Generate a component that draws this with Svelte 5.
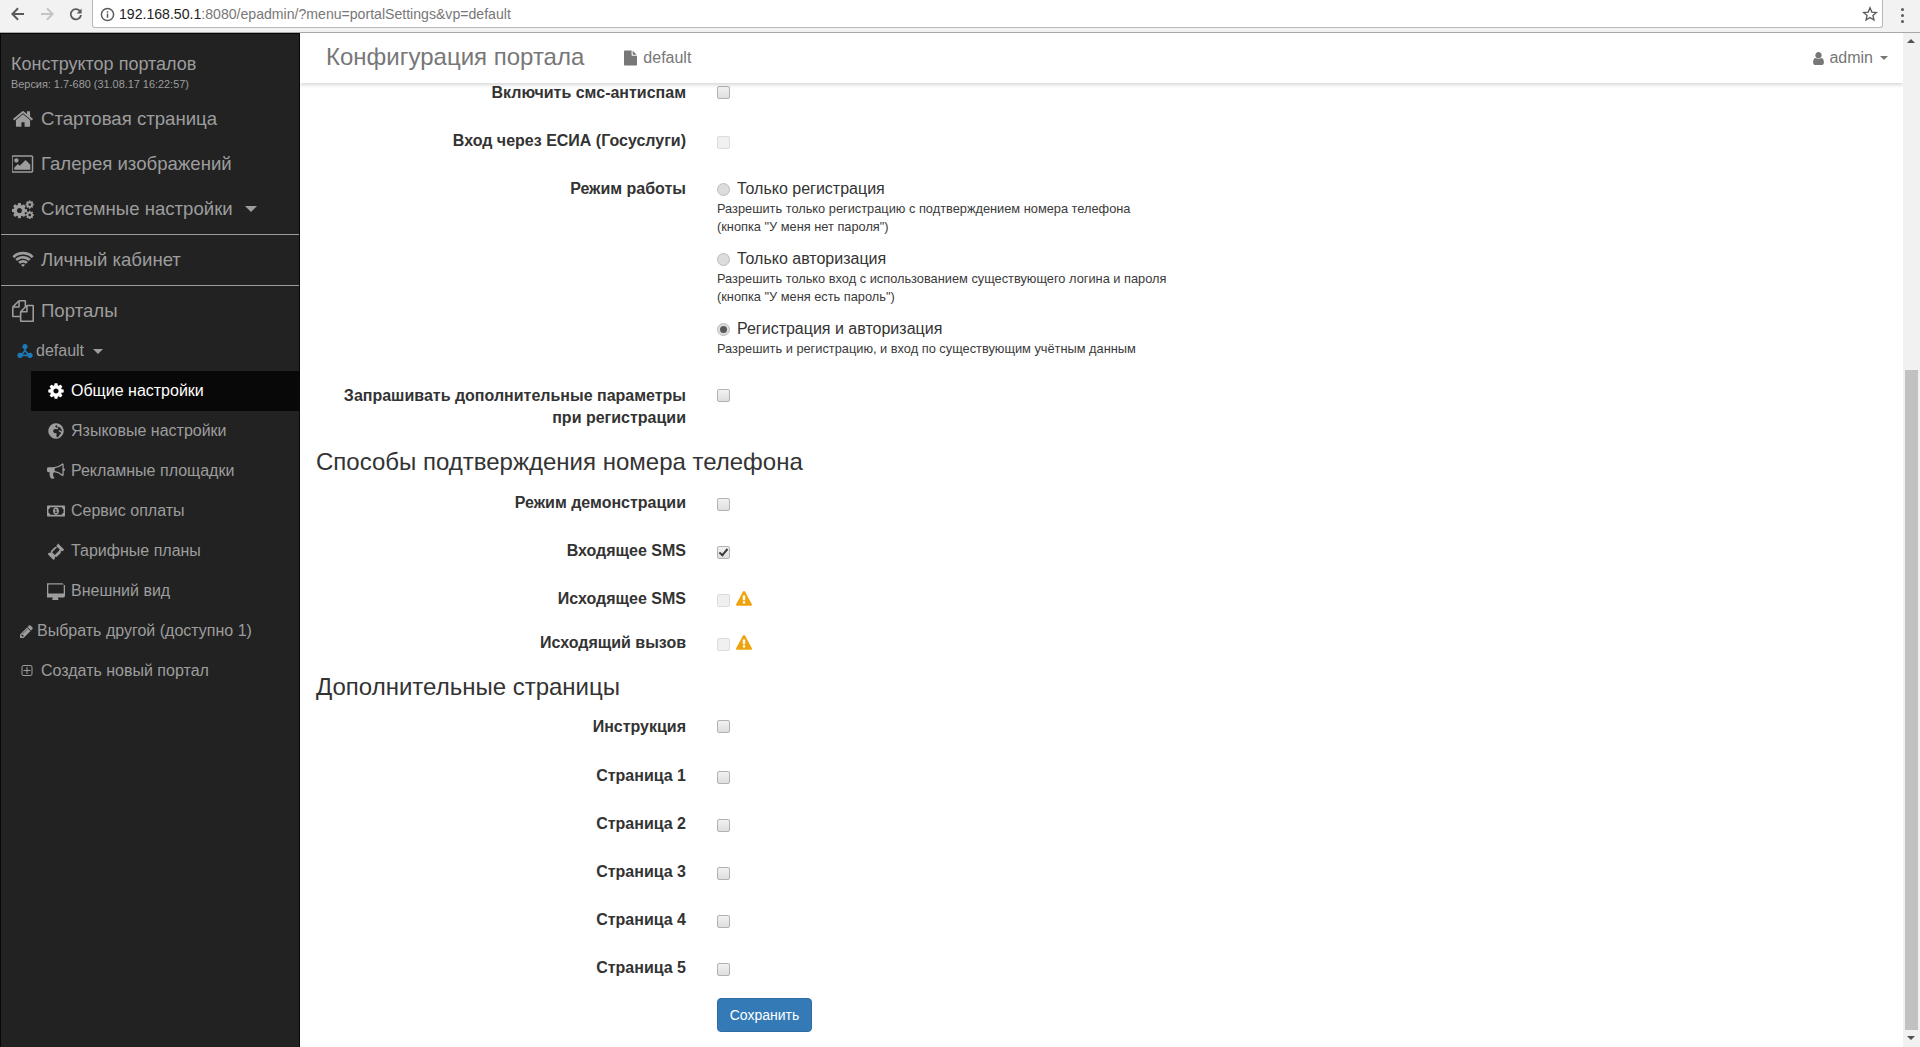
<script lang="ts">
  const icons = {
    home: ['0 0 1792 1792', 'M1472 992v480q0 26-19 45t-45 19h-384v-384h-256v384h-384q-26 0-45-19t-19-45v-480q0-1 .5-3t.5-3l575-474 575 474q1 2 1 6zm223-69l-62 74q-8 9-21 11h-3q-13 0-21-7l-692-577-692 577q-12 8-24 7-13-2-21-11l-62-74q-8-10-7-23.5t11-21.5l719-599q32-26 76-26t76 26l244 204v-195q0-14 9-23t23-9h192q14 0 23 9t9 23v408l219 182q10 8 11 21.5t-7 23.5z'],
    picture: ['0 0 1920 1792', 'M576 576q0 80-56 136t-136 56-136-56-56-136 56-136 136-56 136 56 56 136zm1024 384v448h-1408v-192l320-320 160 160 512-512zm96-704h-1600q-13 0-22.5 9.5t-9.5 22.5v1216q0 13 9.5 22.5t22.5 9.5h1600q13 0 22.5-9.5t9.5-22.5v-1216q0-13-9.5-22.5t-22.5-9.5zm160 32v1216q0 66-47 113t-113 47h-1600q-66 0-113-47t-47-113v-1216q0-66 47-113t113-47h1600q66 0 113 47t47 113z'],
    cog: ['0 0 1792 1792', 'M1152 896q0-106-75-181t-181-75-181 75-75 181 75 181 181 75 181-75 75-181zm512-109v222q0 12-8 23t-20 13l-185 28q-19 54-39 91 35 50 107 138 10 12 10 25t-9 23q-27 37-99 108t-94 71q-12 0-26-9l-138-108q-44 23-91 38-16 136-29 186-7 28-36 28h-222q-14 0-24.5-8.5t-11.5-21.5l-28-184q-49-16-90-37l-141 107q-10 9-25 9-14 0-25-11-126-114-165-168-7-10-7-23 0-12 8-23 15-21 51-66.5t54-70.5q-27-50-41-99l-183-27q-13-2-21-12.5t-8-23.5v-222q0-12 8-23t19-13l186-28q14-46 39-92-40-57-107-138-10-12-10-24 0-10 9-23 26-36 98.5-107.5t94.5-71.5q13 0 26 10l138 107q44-23 91-38 16-136 29-186 7-28 36-28h222q14 0 24.5 8.5t11.5 21.5l28 184q49 16 90 37l142-107q9-9 24-9 13 0 25 10 129 119 165 170 7 8 7 22 0 12-8 23-15 21-51 66.5t-54 70.5q26 50 41 98l183 28q13 2 21 12.5t8 23.5z'],
    wifi: ['0 0 2048 1792', 'M1024 1523q-20 0-93-73.5t-73-93.5q0-32 62.5-54t103.5-22 103.5 22 62.5 54q0 20-73 93.5t-93 73.5zm270-271q-2 0-40-25t-101.5-50-128.5-25-128.5 25-101 50-40.5 25q-18 0-93.5-75t-75.5-93q0-13 10-23 78-77 196-121t233-44 233 44 196 121q10 10 10 23 0 18-75.5 93t-93.5 75zm273-272q-11 0-23-8-136-105-252-154.5t-268-49.5q-85 0-170.5 22t-149 53-113.5 62-79 53-31 22q-17 0-92-75t-75-93q0-12 10-22 132-132 320-205t380-73 380 73 320 205q10 10 10 22 0 18-75 93t-92 75zm271-271q-11 0-22-9-179-157-371.5-236.5t-420.5-79.5-420.5 79.5-371.5 236.5q-11 9-22 9-17 0-92.5-75t-75.5-93q0-13 10-23 187-186 445-288t527-102 527 102 445 288q10 10 10 23 0 18-75.5 93t-92.5 75z'],
    files: ['0 0 1792 1792', 'M1696 384q40 0 68 28t28 68v1216q0 40-28 68t-68 28h-960q-40 0-68-28t-28-68v-288h-544q-40 0-68-28t-28-68v-672q0-40 20-88t48-76l408-408q28-28 76-48t88-20h416q40 0 68 28t28 68v328q68-40 128-40h416zm-544 213l-299 299h299v-299zm-640-384l-299 299h299v-299zm196 647l316-316v-416h-384v416q0 40-28 68t-68 28h-416v640h512v-256q0-40 20-88t48-76zm956 804v-1152h-384v416q0 40-28 68t-68 28h-416v640h896z'],
    tree: ['0 0 1792 1792', 'M896 120a290 290 0 1 1-1 0zM340 1080a300 300 0 1 1-1 0zM1452 1080a300 300 0 1 1-1 0zM800 500h192v300l330 430-140 110-290-370-280 370-140-110 328-430zM560 1300h672v170H560z'],
    globe: ['0 0 1792 1792', 'M896 128a768 768 0 1 1-1 0zM1000 300l-120 60-60 120 100 80 140-30 70 110-120 90-200-40-170 90-30 170 130 160 170-10 60 120-50 150 90 170 130-60 100-190 140-130-20-130-180-90-20-140 170 40 90 100 70-50c-30-210-180-430-490-420z'],
    bullhorn: ['0 0 1792 1792', 'M1664 640q53 0 90.5 37.5t37.5 90.5-37.5 90.5-90.5 37.5v384q0 52-38 90t-90 38q-417-347-812-380-58 19-91 66t-31 100.5 40 92.5q-20 33-23 65.5t6 58 33.5 55 48 50 61.5 50.5q-29 58-111.5 83t-168.5 11.5-132-55.5q-7-23-29.5-87.5t-32-94.5-23-89-15-101 3.5-98.5 22-110.5h-122q-66 0-113-47t-47-113v-192q0-66 47-113t113-47h480q435 0 896-384 52 0 90 38t38 90v384zm-128 604v-954q-394 302-768 343v270q377 42 768 341z'],
    money: ['0 0 1920 1792', 'M96 320h1728q40 0 68 28t28 68v960q0 40-28 68t-68 28H96q-40 0-68-28t-28-68V416q0-40 28-68t68-28zM330 500q0 106-75 150t-100 50v392q60 10 100 54t75 146h1260q30-100 75-146t100-54V700q-60-10-100-54t-75-146zM960 512q160 0 240 120t80 264-80 264-240 120-240-120-80-264 80-264 240-120zM830 1120h270v-90h-90V670H910l-110 100 60 70 50-45v235h-80z'],
    ticket: ['0 0 1792 1792', 'M1050 100l640 640q30 30 0 60l-150 130q-60-60-140-10t-10 140L960 1490q-60-60-140-10t-10 140l-130 140q-30 30-60 0L100 1240q-30-30 0-60l130-140q70 60 140 0t10-140l430-430q70 70 140 10t-10-140l150-140q30-30 60-60zM1020 510L510 1020l262 262 510-510z'],
    desktop: ['0 0 1792 1792', 'M1664 1120v-832q0-13-9.5-22.5t-22.5-9.5h-1472q-13 0-22.5 9.5t-9.5 22.5v832q0 13 9.5 22.5t22.5 9.5h1472q13 0 22.5-9.5t9.5-22.5zm128-832v1088q0 66-47 113t-113 47h-544q0 37 16 77.5t32 71 16 43.5q0 26-19 45t-45 19h-512q-26 0-45-19t-19-45q0-14 16-44t32-70 16-78h-544q-66 0-113-47t-47-113v-1088q0-66 47-113t113-47h1472q66 0 113 47t47 113z'],
    pencil: ['0 0 1792 1792', 'M491 1536l91-91-235-235-91 91v107h128v128h107zm523-928q0-22-22-22-10 0-17 7l-542 542q-7 7-7 17 0 22 22 22 10 0 17-7l542-542q7-7 7-17zm-54-192l416 416-832 832h-416v-416zm683 96q0 53-37 90l-166 166-416-416 166-165q36-38 90-38 53 0 91 38l235 234q37 39 37 91z'],
    plus: ['0 0 1792 1792', 'M1344 800v64q0 14-9 23t-23 9h-352v352q0 14-9 23t-23 9h-64q-14 0-23-9t-9-23v-352h-352q-14 0-23-9t-9-23v-64q0-14 9-23t23-9h352v-352q0-14 9-23t23-9h64q14 0 23 9t9 23v352h352q14 0 23 9t9 23zm128 448v-832q0-66-47-113t-113-47h-832q-66 0-113 47t-47 113v832q0 66 47 113t113 47h832q66 0 113-47t47-113zm128-832v832q0 119-84.5 203.5t-203.5 84.5h-832q-119 0-203.5-84.5t-84.5-203.5v-832q0-119 84.5-203.5t203.5-84.5h832q119 0 203.5 84.5t84.5 203.5z'],
    file: ['0 0 1536 1792', 'M1024 512V40q22 14 36 28l408 408q14 14 28 36h-472zm-128 32q0 40 28 68t68 28h544v1056q0 40-28 68t-68 28H96q-40 0-68-28t-28-68V96q0-40 28-68t68-28h800v544z'],
    user: ['0 0 1792 1792', 'M1536 1399q0 109-62.5 187t-150.5 78h-854q-88 0-150.5-78t-62.5-187q0-85 8.5-160.5t31.5-152 58.5-131 94-89 134.5-34.5q131 128 313 128t313-128q76 0 134.5 34.5t94 89 58.5 131 31.5 152 8.5 160.5zm-256-887q0 159-112.5 271.5t-271.5 112.5-271.5-112.5-112.5-271.5 112.5-271.5 271.5-112.5 271.5 112.5 112.5 271.5z'],
    warning: ['0 0 1792 1792', 'M1024 1375v-190q0-14-9.5-23.5t-22.5-9.5h-192q-13 0-22.5 9.5t-9.5 23.5v190q0 14 9.5 23.5t22.5 9.5h192q13 0 22.5-9.5t9.5-23.5zm-2-374l18-459q0-12-10-19-13-11-24-11h-220q-11 0-24 11-10 7-10 21l17 457q0 10 10 16.5t24 6.5h185q14 0 23.5-6.5t10.5-16.5zm-14-934l768 1408q35 63-2 126-17 29-46.5 46t-63.5 17h-1536q-34 0-63.5-17t-46.5-46q-37-63-2-126l768-1408q17-31 47-49t65-18 65 18 47 49z'],
  }

  const subItems = [
    { icon: 'cog', label: 'Общие настройки', active: true },
    { icon: 'globe', label: 'Языковые настройки' },
    { icon: 'bullhorn', label: 'Рекламные площадки' },
    { icon: 'money', label: 'Сервис оплаты' },
    { icon: 'ticket', label: 'Тарифные планы' },
    { icon: 'desktop', label: 'Внешний вид' },
  ]

  const phoneRows = [
    { label: 'Режим демонстрации' },
    { label: 'Входящее SMS', checked: true },
    { label: 'Исходящее SMS', disabled: true, warn: true },
    { label: 'Исходящий вызов', disabled: true, warn: true },
  ]

  const pageRows = ['Инструкция', 'Страница 1', 'Страница 2', 'Страница 3', 'Страница 4', 'Страница 5']
</script>

{#snippet icon(name, cls)}
  <svg class="icon {cls}" viewBox={icons[name][0]} aria-hidden="true"><path d={icons[name][1]} /></svg>
{/snippet}

{#snippet check(disabled, checked)}
  <input class="check" type="checkbox" {disabled} {checked} />
{/snippet}

<div class="window">
  <div class="chrome">
    <svg class="nav-btn" viewBox="0 0 16 16"><path d="M14 7H4.800l4-4L7.400 1.600 1 8l6.400 6.400 1.400-1.400-4-4H14z" fill="#5a5a5a" /></svg>
    <svg class="nav-btn" viewBox="0 0 16 16"><path d="M2 7h9.200l-4-4 1.400-1.400L15 8l-6.400 6.400L7.200 13l4-4H2z" fill="#c4c4c4" /></svg>
    <svg class="nav-btn" viewBox="0 0 16 16"><path d="M13.600 2.400v5h-5l2.200-2.200A4.200 4.200 0 1 0 12 9h1.900a6 6 0 1 1-1.700-5z" fill="#5a5a5a" /></svg>
    <div class="omnibox">
      <svg class="info" viewBox="0 0 16 16"><circle cx="8" cy="8" r="6.500" fill="none" stroke="#5a5a5a" stroke-width="1.600" /><rect x="7.200" y="7" width="1.600" height="4.500" fill="#5a5a5a" /><rect x="7.200" y="4.500" width="1.600" height="1.600" fill="#5a5a5a" /></svg>
      <span class="url"><b>192.168.50.1</b>:8080/epadmin/?menu=portalSettings&amp;vp=default</span>
      <svg class="star" viewBox="0 0 16 16"><path d="M8 1.800l1.800 4.300 4.600.4-3.500 3 1.100 4.500L8 11.600 4 14l1.100-4.500-3.500-3 4.600-.4z" fill="none" stroke="#5a5a5a" stroke-width="1.300" /></svg>
    </div>
    <div class="dots"><i></i><i></i><i></i></div>
  </div>

  <div class="body">
    <aside class="sidebar">
      <div class="brand">
        <div class="brand-name">Конструктор порталов</div>
        <div class="brand-version">Версия: 1.7-680 (31.08.17 16:22:57)</div>
      </div>
      <a class="main-link">{@render icon('home', 'i-main')}Стартовая страница</a>
      <a class="main-link">{@render icon('picture', 'i-main')}Галерея изображений</a>
      <a class="main-link">
        <svg class="icon i-main" viewBox="0 0 2048 1792" aria-hidden="true">
          <path transform="translate(-130 220) scale(.92)" d={icons.cog[1]} />
          <path transform="translate(1200 30) scale(.5)" d={icons.cog[1]} />
          <path transform="translate(1200 1000) scale(.5)" d={icons.cog[1]} />
        </svg>
        Системные настройки<span class="caret big"></span>
      </a>
      <hr />
      <a class="main-link">{@render icon('wifi', 'i-main')}Личный кабинет</a>
      <hr />
      <a class="main-link">{@render icon('files', 'i-main')}Порталы</a>
      <a class="portal tree">{@render icon('tree', 'i-tree')}default<span class="caret"></span></a>
      <ul class="subnav">
        {#each subItems as item}
          <li class:active={item.active}>{@render icon(item.icon, 'i-sub')}{item.label}</li>
        {/each}
      </ul>
      <a class="portal">{@render icon('pencil', 'i-pick')}Выбрать другой (доступно 1)</a>
      <a class="portal">{@render icon('plus', 'i-plus')}Создать новый портал</a>
    </aside>

    <main class="main">
      <header class="topbar">
        <span class="title">Конфигурация портала</span>
        <span class="doc">{@render icon('file', 'i-file')}default</span>
        <span class="admin">{@render icon('user', 'i-user')}admin<span class="caret small"></span></span>
      </header>

      <form class="form">
        <div class="row first">
          <span class="label">Включить смс-антиспам</span>
          <div>{@render check(false, false)}</div>
        </div>
        <div class="row">
          <span class="label">Вход через ЕСИА (Госуслуги)</span>
          <div>{@render check(true, false)}</div>
        </div>
        <div class="row modes">
          <span class="label">Режим работы</span>
          <div class="radios">
            <div class="radio">
              <label><input type="radio" name="mode" />Только регистрация</label>
              <p>Разрешить только регистрацию с подтверждением номера телефона<br />(кнопка "У меня нет пароля")</p>
            </div>
            <div class="radio">
              <label><input type="radio" name="mode" />Только авторизация</label>
              <p>Разрешить только вход с использованием существующего логина и пароля<br />(кнопка "У меня есть пароль")</p>
            </div>
            <div class="radio">
              <label><input type="radio" name="mode" checked />Регистрация и авторизация</label>
              <p>Разрешить и регистрацию, и вход по существующим учётным данным</p>
            </div>
          </div>
        </div>
        <div class="row extra">
          <span class="label">Запрашивать дополнительные параметры<br />при регистрации</span>
          <div>{@render check(false, false)}</div>
        </div>

        <h3>Способы подтверждения номера телефона</h3>
        {#each phoneRows as r}
          <div class="row" class:warned={r.warn}>
            <span class="label">{r.label}</span>
            <div class="ctl">
              {@render check(r.disabled, r.checked)}
              {#if r.warn}{@render icon('warning', 'i-warn')}{/if}
            </div>
          </div>
        {/each}

        <h3 class="pages">Дополнительные страницы</h3>
        {#each pageRows as label, i}
          <div class="row" class:lead={i === 0}>
            <span class="label">{label}</span>
            <div>{@render check(false, false)}</div>
          </div>
        {/each}

        <div class="row actions">
          <span></span>
          <div><button type="button">Сохранить</button></div>
        </div>
      </form>
    </main>

    <div class="scrollbar">
      <span class="arrow up"></span>
      <div class="track"><div class="thumb"></div></div>
      <span class="arrow down"></span>
    </div>
  </div>
</div>

<style>
  :global(body) {
    margin: 0;
    font-family: "Liberation Sans", Arial, sans-serif;
    font-size: 16px;
    line-height: 20px;
    color: #333;
    background: #fff;
  }

  .window {
    height: 1047px;
    display: flex;
    flex-direction: column;
    overflow: hidden;
  }

  .chrome {
    height: 33px;
    box-sizing: border-box;
    flex: none;
    display: flex;
    align-items: flex-start;
    padding-left: 10px;
    background: #f2f2f2;
    border-bottom: 1px solid #a8a8a8;
  }

  .nav-btn {
    width: 16px;
    height: 16px;
    margin-top: 6px;
    margin-right: 13px;
  }

  .omnibox {
    width: 1791px;
    height: 28px;
    box-sizing: border-box;
    margin-left: -5px;
    display: flex;
    align-items: center;
    padding: 1px 4px 0 7px;
    background: #fff;
    border: 1px solid #b8b8b8;
    border-top: 0;
    border-radius: 0 0 3px 3px;
  }

  .info {
    width: 15px;
    height: 15px;
    margin-right: 4px;
  }

  .url {
    flex: 1;
    font-size: 14.1px;
    color: #777;
  }

  .url b {
    font-weight: normal;
    color: #222;
  }

  .star {
    width: 16px;
    height: 16px;
  }

  .dots {
    display: flex;
    flex-direction: column;
    gap: 3px;
    margin: 8px 0 0 18px;
  }

  .dots i {
    width: 3px;
    height: 3px;
    border-radius: 50%;
    background: #5a5a5a;
  }

  .body {
    flex: 1;
    display: flex;
    min-height: 0;
  }

  .sidebar {
    width: 300px;
    flex: none;
    box-sizing: border-box;
    background: #222;
    border: 1px solid #080808;
    border-bottom: 0;
    color: #9d9d9d;
  }

  .brand {
    padding: 20px 0 0 10px;
    height: 62px;
    box-sizing: border-box;
  }

  .brand-name {
    font-size: 18px;
    line-height: 20px;
  }

  .brand-version {
    font-size: 10.900px;
    line-height: 20px;
  }

  .main-link {
    display: flex;
    align-items: center;
    height: 45px;
    padding-left: 11px;
    font-size: 18.600px;
  }

  .sidebar hr {
    border: 0;
    border-top: 1px solid #9d9d9d;
    margin: 3px 0 2px;
    height: 0;
  }

  .caret {
    width: 0;
    height: 0;
    border-top: 5px solid currentColor;
    border-left: 5px solid transparent;
    border-right: 5px solid transparent;
    margin-left: 9px;
  }

  .caret.big {
    border-top-width: 6px;
    border-left-width: 6px;
    border-right-width: 6px;
    margin-left: 12px;
  }

  .caret.small {
    border-top-width: 4px;
    border-left-width: 4px;
    border-right-width: 4px;
    margin-left: 7px;
  }

  .portal {
    display: flex;
    align-items: center;
    height: 40px;
    font-size: 16px;
    padding-left: 16px;
  }

  .portal.tree {
    margin-top: -2px;
  }

  .subnav {
    list-style: none;
    margin: 0 0 0 30px;
    padding: 0;
  }

  .subnav li {
    display: flex;
    align-items: center;
    height: 40px;
    padding-left: 17px;
    font-size: 16px;
  }

  .subnav li.active {
    background: #080808;
    color: #fff;
  }

  .icon {
    flex: none;
    fill: currentColor;
  }

  .i-main {
    width: 22px;
    height: 22px;
    margin-right: 7px;
  }

  .i-tree {
    width: 16px;
    height: 16px;
    margin-right: 3px;
    color: #1b7ab5;
  }

  .i-sub {
    width: 18px;
    height: 18px;
    margin: 0 6px 0 -1px;
  }

  .i-pick {
    width: 15px;
    height: 15px;
    margin: 0 3px 0 2px;
  }

  .i-plus {
    width: 14px;
    height: 14px;
    margin: 0 7px 0 3px;
  }

  .main {
    flex: 1;
    min-width: 0;
    display: flex;
    flex-direction: column;
    position: relative;
    overflow: hidden;
  }

  .topbar {
    height: 50px;
    box-sizing: border-box;
    flex: none;
    display: flex;
    align-items: center;
    padding: 0 15px 2px 26px;
    color: #777;
    font-size: 16px;
    background: #fff;
    box-shadow: 0 2px 4px rgba(0, 0, 0, 0.16);
    position: relative;
    z-index: 1;
  }

  .title {
    font-size: 24px;
    margin-right: 40px;
  }

  .doc,
  .admin {
    display: flex;
    align-items: center;
    padding-top: 2px;
  }

  .admin {
    margin-left: auto;
  }

  .i-file {
    width: 13px;
    height: 16px;
    margin-right: 6px;
  }

  .i-user {
    width: 15px;
    height: 15px;
    margin-right: 3px;
  }

  .form {
    padding: 0 16px;
  }

  .row {
    display: grid;
    grid-template-columns: 370px 1fr;
    column-gap: 31px;
    height: 48px;
  }

  .row.first {
    margin-top: -1px;
  }

  .label {
    font-weight: bold;
    text-align: right;
    line-height: 22px;
  }

  input {
    appearance: none;
    box-sizing: border-box;
    display: block;
    flex: none;
    width: 13px;
    height: 13px;
    background: linear-gradient(#f2f2f2, #dedede);
    border: 1px solid #b2b2b2;
  }

  .check {
    margin: 6px 0 0;
    border-radius: 2px;
    position: relative;
  }

  .check:disabled {
    background: #f0f0f0;
    border-color: #dcdcdc;
  }

  .check:checked::after {
    content: "";
    position: absolute;
    left: 3px;
    top: 0;
    width: 3px;
    height: 7px;
    border: solid #3c3c3c;
    border-width: 0 2px 2px 0;
    transform: rotate(40deg);
  }

  .first .check,
  .extra .check,
  .lead .check {
    margin-top: 4px;
  }

  .lead {
    height: 49px;
  }

  .modes {
    height: auto;
    margin-bottom: 27px;
  }

  .radio {
    margin-bottom: 12px;
  }

  .radio:last-child {
    margin-bottom: 0;
  }

  .radio label {
    display: flex;
    align-items: center;
    height: 22px;
    line-height: 22px;
  }

  .radio input {
    margin: 0 7px 0 0;
    border-radius: 50%;
    background: #dcdcdc;
    border-color: #bdbdbd;
    position: relative;
  }

  .radio input:checked::after {
    content: "";
    position: absolute;
    left: 2px;
    top: 2px;
    width: 7px;
    height: 7px;
    border-radius: 50%;
    background: #5a5a5a;
  }

  .radio p {
    margin: 0;
    font-size: 12.800px;
    line-height: 18px;
    color: #3a3a3a;
  }

  .extra {
    height: 64px;
  }

  h3 {
    margin: 0 0 17px;
    font-size: 24px;
    font-weight: normal;
    line-height: 26px;
  }

  h3.pages {
    margin-bottom: 16px;
  }

  .ctl {
    display: flex;
    align-items: flex-start;
    gap: 6px;
  }

  .warned {
    height: 44px;
  }

  .warned + .warned {
    height: 42px;
  }

  .i-warn {
    width: 16px;
    height: 16px;
    margin-top: 3px;
    color: #eea40e;
  }

  .actions {
    height: auto;
    margin-top: -7px;
  }

  button {
    width: 95px;
    height: 34px;
    padding: 0;
    font-family: inherit;
    font-size: 14px;
    color: #fff;
    background: #337ab7;
    border: 1px solid #2e6da4;
    border-radius: 4px;
  }

  .scrollbar {
    width: 17px;
    flex: none;
    display: flex;
    flex-direction: column;
    background: #f1f1f1;
  }

  .track {
    flex: 1;
    padding: 320px 2px 0;
    display: flex;
    flex-direction: column;
  }

  .thumb {
    height: 660px;
    background: #c1c1c1;
  }

  .arrow {
    display: block;
    height: 17px;
    box-sizing: border-box;
    position: relative;
  }

  .arrow::after {
    content: "";
    position: absolute;
    left: 4px;
    width: 0;
    height: 0;
    border-left: 4px solid transparent;
    border-right: 4px solid transparent;
  }

  .arrow.up::after {
    top: 6px;
    border-bottom: 4px solid #505050;
  }

  .arrow.down::after {
    top: 6px;
    border-top: 4px solid #505050;
  }
</style>
